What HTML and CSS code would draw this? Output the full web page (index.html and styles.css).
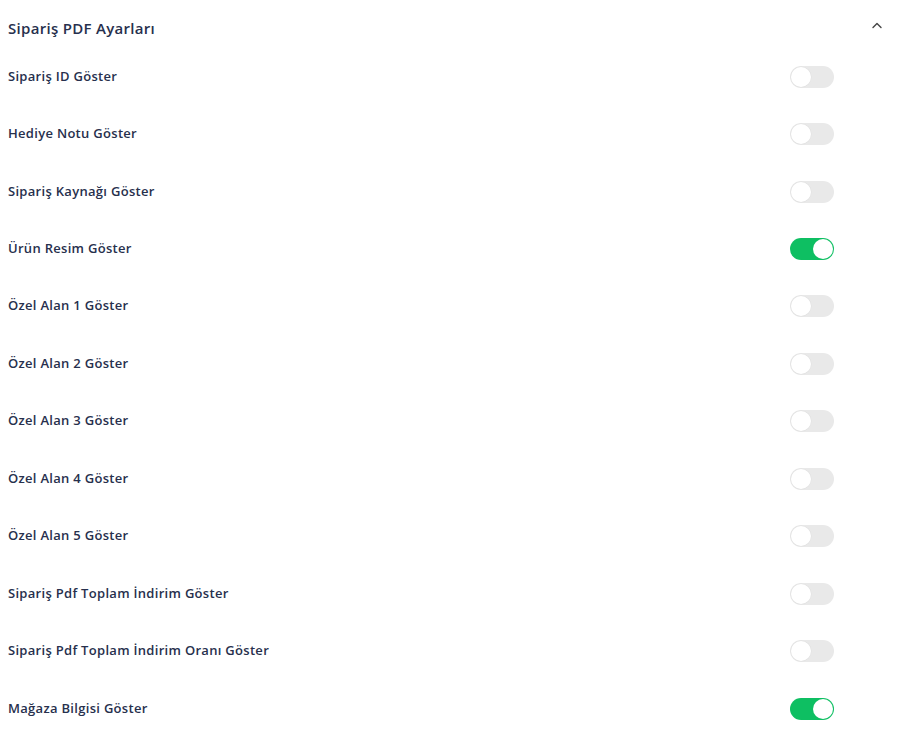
FILE: index.html
```html
<!DOCTYPE html>
<html lang="tr">
<head>
  <meta charset="UTF-8">
  <meta name="viewport" content="width=device-width, initial-scale=1.0">
  <title>Sipariş PDF Ayarları</title>
  <link rel="stylesheet" href="styles.css">
</head>
<body>
  <div class="panel">
    <div class="panel-header">
      <span class="panel-title">Sipariş PDF Ayarları</span>
      <svg class="chevron" width="12" height="8" viewBox="0 0 12 8" aria-hidden="true">
        <path d="M2 6.5 L6 2.5 L10 6.5" fill="none" stroke="#444" stroke-width="1.4" stroke-linecap="round" stroke-linejoin="round"/>
      </svg>
    </div>

    <div class="row"><span class="label">Sipariş ID Göster</span><span class="switch"></span></div>
    <div class="row"><span class="label">Hediye Notu Göster</span><span class="switch"></span></div>
    <div class="row"><span class="label">Sipariş Kaynağı Göster</span><span class="switch"></span></div>
    <div class="row"><span class="label">Ürün Resim Göster</span><span class="switch on"></span></div>
    <div class="row"><span class="label">Özel Alan 1 Göster</span><span class="switch"></span></div>
    <div class="row"><span class="label">Özel Alan 2 Göster</span><span class="switch"></span></div>
    <div class="row"><span class="label">Özel Alan 3 Göster</span><span class="switch"></span></div>
    <div class="row"><span class="label">Özel Alan 4 Göster</span><span class="switch"></span></div>
    <div class="row"><span class="label">Özel Alan 5 Göster</span><span class="switch"></span></div>
    <div class="row"><span class="label">Sipariş Pdf Toplam İndirim Göster</span><span class="switch"></span></div>
    <div class="row"><span class="label">Sipariş Pdf Toplam İndirim Oranı Göster</span><span class="switch"></span></div>
    <div class="row"><span class="label">Mağaza Bilgisi Göster</span><span class="switch on"></span></div>
  </div>
</body>
</html>
```

FILE: styles.css
```css
/* Reset */
* {
  margin: 0;
  padding: 0;
  box-sizing: border-box;
}

body {
  font-family: 'Open Sans', 'Noto Sans', sans-serif;
  background-color: #fff;
  color: #27304d;
}

/* Intestazione pannello */
.panel-header {
  display: flex;
  justify-content: space-between;
  align-items: center;
  height: 47px;
  padding: 8px 18px 0 8px;
}

.panel-title {
  font-size: 15px;
  font-weight: 600;
  letter-spacing: 0.3px;
}

.chevron {
  display: block;
  margin-top: -6px;
}

/* Righe */
.row {
  display: flex;
  justify-content: space-between;
  align-items: center;
  height: 57.45px;
  padding: 0 67px 0 8px;
}

.label {
  font-size: 13px;
  font-weight: 600;
  letter-spacing: 0.3px;
}

/* Interruttore */
.switch {
  position: relative;
  width: 44px;
  height: 22px;
  border-radius: 11px;
  background-color: #e9e9e9;
  margin-top: 2px;
}

.switch::after {
  content: '';
  position: absolute;
  top: 1px;
  left: 1px;
  width: 20px;
  height: 20px;
  border-radius: 50%;
  background-color: #fff;
  box-shadow: 0 0 0 0.5px #e0e0e0;
}

.switch.on {
  background-color: #0ebf62;
}

.switch.on::after {
  left: 23px;
  box-shadow: none;
}
```
